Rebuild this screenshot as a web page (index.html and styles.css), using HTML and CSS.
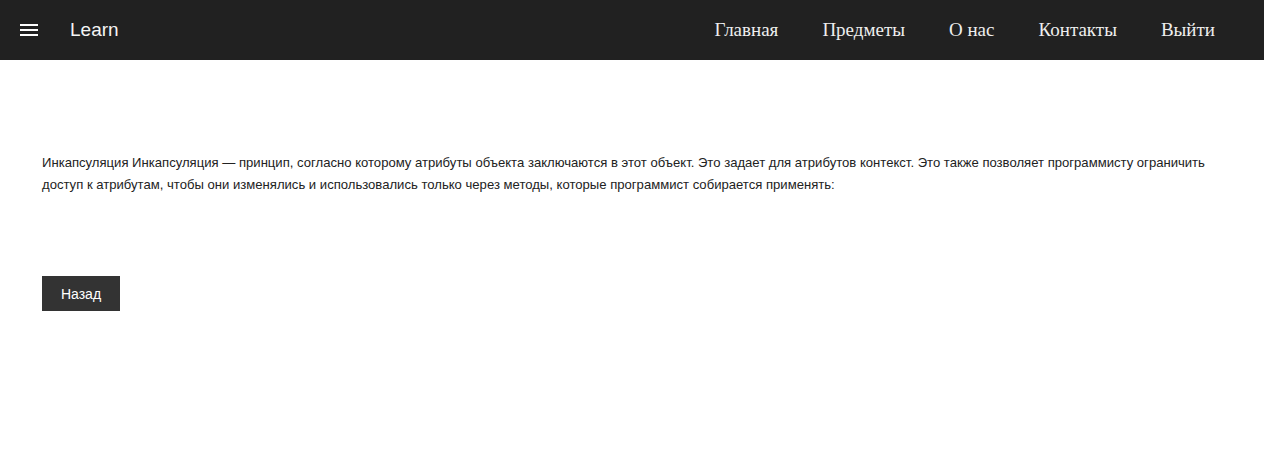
FILE: index.html
```html
<!DOCTYPE html>
<html lang="ru">
<head>
<meta charset="utf-8">
<link rel="stylesheet" href="styles.css">
</head>
<body>
<header class="navbar">
  <div class="brand">
    <svg class="menu-icon" width="18" height="12" viewBox="0 0 18 12"><rect x="0" y="0" width="18" height="2" fill="#fff"/><rect x="0" y="5" width="18" height="2" fill="#fff"/><rect x="0" y="10" width="18" height="2" fill="#fff"/></svg>
    <span class="logo">Learn</span>
  </div>
  <nav class="links">
    <a href="#">Главная</a>
    <a href="#">Предметы</a>
    <a href="#">О нас</a>
    <a href="#">Контакты</a>
    <a href="#">Выйти</a>
  </nav>
</header>
<main class="content">
  <p class="text">Инкапсуляция Инкапсуляция — принцип, согласно которому атрибуты объекта заключаются в этот объект. Это задает для атрибутов контекст. Это также позволяет программисту ограничить доступ к атрибутам, чтобы они изменялись и использовались только через методы, которые программист собирается применять:</p>
  <button class="back">Назад</button>
</main>
</body>
</html>
```
FILE: styles.css
```css
* { box-sizing: border-box; }
body { margin: 0; background: #fff; font-family: "Liberation Sans", Arial, sans-serif; }
.navbar { height: 60px; background: #212121; display: flex; align-items: center; justify-content: space-between; padding: 0 27px 0 20px; }
.brand { display: flex; align-items: center; gap: 32px; }
.menu-icon { display: block; }
.logo { color: #f5f5f5; font-size: 19px; }
.links { display: flex; }
.links a { color: #eee; text-decoration: none; font-family: "Liberation Serif", "Times New Roman", serif; font-size: 19px; padding: 0 22px; }
.content { padding: 92px 30px 0 42px; }
.text { margin: 0; font-size: 13.1px; line-height: 22px; color: #222; }
.back { margin-top: 80px; background: #333; color: #fff; border: none; font-family: "Liberation Sans", Arial, sans-serif; font-size: 14px; width: 78px; height: 35px; padding: 0; }
```
